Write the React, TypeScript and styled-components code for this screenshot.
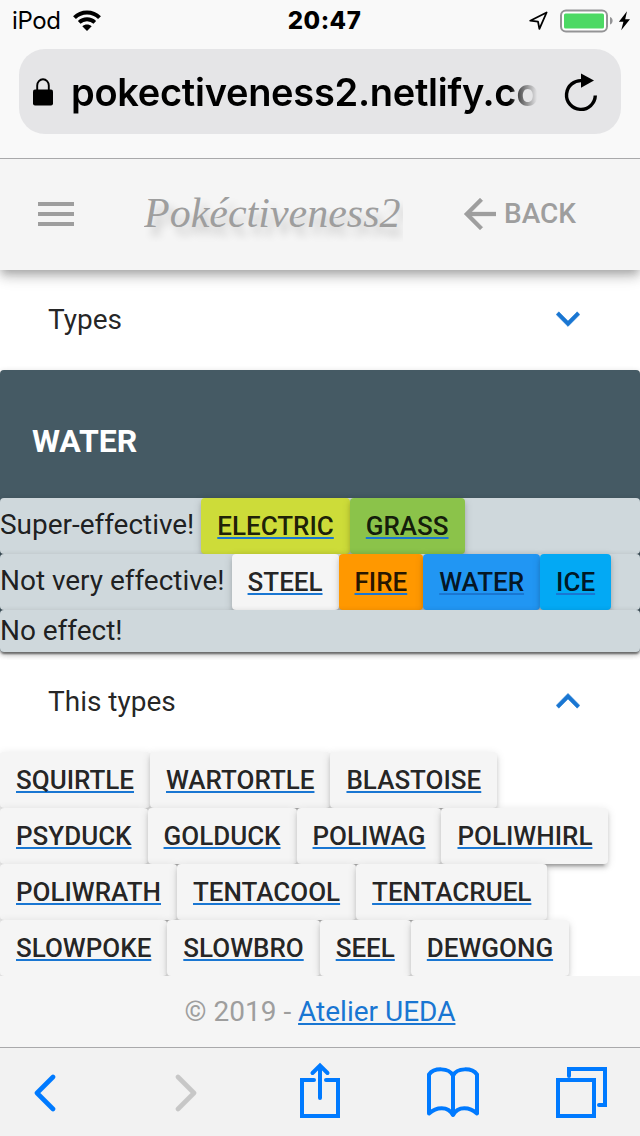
import React from 'react';
import styled, { createGlobalStyle } from 'styled-components';

const GlobalStyle = createGlobalStyle`
  *, *::before, *::after { box-sizing: border-box; }
  body { margin: 0; background: #fff; }
`;

const Screen = styled.div`
  width: 640px;
  height: 1136px;
  display: flex;
  flex-direction: column;
  overflow: hidden;
  background: #fff;
  color: rgba(0, 0, 0, 0.87);
  font-family: Roboto, sans-serif;
  font-size: 28px;
`;

const BrowserHeader = styled.header`
  flex: none;
  position: relative;
  z-index: 2;
  height: 159px;
  background: #f9f9f9;
  border-bottom: 1px solid #a9a9ab;
  color: #000;
  font-family: Inter, sans-serif;
`;

const StatusBar = styled.div`
  height: 49px;
  padding: 0 9px 8px 12px;
  display: grid;
  grid-template-columns: 1fr auto 1fr;
  align-items: center;
`;

const StatusGroup = styled.div<{ $end?: boolean }>`
  display: flex;
  align-items: center;
  justify-content: ${(p) => (p.$end ? 'flex-end' : 'flex-start')};
`;

const Carrier = styled.span`
  width: 60px;
  font-size: 24px;
  line-height: 30px;
  letter-spacing: -0.4px;
`;

const Clock = styled.time`
  padding-left: 6px;
  font-size: 24px;
  font-weight: 800;
  line-height: 30px;
  letter-spacing: 0.5px;
`;

const AddressBar = styled.div`
  margin: 0 19px;
  height: 85px;
  padding: 0 22px 0 14px;
  border-radius: 26px;
  background: #e5e5e7;
  display: flex;
  align-items: center;
`;

const Url = styled.div`
  width: 468px;
  margin: 0 24px 0 18px;
  white-space: nowrap;
  font-size: 38px;
  font-weight: 600;
  line-height: 56px;
  letter-spacing: -0.28px;
  mask-image: linear-gradient(to right, #000 438px, transparent 466px);
`;

const AppBar = styled.nav`
  flex: none;
  position: relative;
  z-index: 1;
  height: 111px;
  padding: 0 64px 2px 38px;
  display: flex;
  align-items: center;
  background: #f5f5f5;
  color: #9e9e9e;
  box-shadow: 0 4px 8px -2px rgba(0, 0, 0, 0.2), 0 8px 10px 0 rgba(0, 0, 0, 0.14),
    0 2px 20px 0 rgba(0, 0, 0, 0.12);
`;

const Brand = styled.h1`
  margin: 0 61px 2px 70px;
  width: 259px;
  font-family: 'Liberation Serif', serif;
  font-style: italic;
  font-weight: 400;
  font-size: 42px;
  line-height: 60px;
  white-space: nowrap;
  text-shadow: 6px 8px 8px rgba(0, 0, 0, 0.2);
  clip-path: inset(0);
`;

const BackButton = styled.button`
  padding: 0;
  border: 0;
  background: none;
  display: flex;
  align-items: center;
  gap: 8px;
  color: inherit;
  font: 500 28px/48px Roboto, sans-serif;
`;

const Content = styled.main`
  flex: 1;
  min-height: 0;
  overflow: hidden;
`;

const PanelSummary = styled.div`
  height: 100px;
  padding: 0 60px 0 48px;
  display: flex;
  align-items: center;
  justify-content: space-between;
  line-height: 42px;

  svg {
    margin-bottom: 3px;
  }
`;

const TypeCard = styled.section`
  border-radius: 4px;
  background: #455a64;
  box-shadow: 0 2px 6px 0 rgba(0, 0, 0, 0.2), 0 2px 2px 0 rgba(0, 0, 0, 0.14),
    0 4px 2px -2px rgba(0, 0, 0, 0.12);
`;

const CardTitle = styled.h2`
  margin: 0;
  height: 128px;
  padding: 14px 32px 0;
  color: #fff;
  font-size: 32px;
  font-weight: 700;
  line-height: 114px;
`;

const EffectRow = styled.div`
  position: relative;
  display: flex;
  min-height: 42px;
  border-radius: 4px;
  background: #cfd8dc;
  box-shadow: 0 2px 6px 0 rgba(0, 0, 0, 0.2), 0 2px 2px 0 rgba(0, 0, 0, 0.14),
    0 4px 2px -2px rgba(0, 0, 0, 0.12);
`;

const EffectLabel = styled.span<{ $tall: boolean }>`
  padding-right: 7px;
  line-height: ${(p) => (p.$tall ? 54 : 42)}px;
  letter-spacing: -0.03px;
  white-space: nowrap;
`;

const ChipRow = styled.div`
  display: flex;
`;

const Chip = styled.a<{ $color?: string }>`
  height: 56px;
  padding: 0 16px;
  border-radius: 4px;
  background: ${(p) => p.$color ?? '#f5f5f5'};
  box-shadow: 0 6px 2px -4px rgba(0, 0, 0, 0.2), 0 4px 4px 0 rgba(0, 0, 0, 0.14),
    0 2px 10px 0 rgba(0, 0, 0, 0.12);
  font-size: 26px;
  font-weight: 500;
  line-height: 56px;
  letter-spacing: -0.01px;
  white-space: nowrap;
  text-decoration: underline #1976d2 1.6px;
  text-decoration-skip-ink: none;
  text-underline-offset: 2px;
`;

const Footer = styled.footer`
  flex: none;
  position: relative;
  height: 71px;
  background: #f5f5f5;
  color: #9e9e9e;
  text-align: center;
  line-height: 71px;
`;

const FooterLink = styled.a`
  color: #1976d2;
  text-decoration: underline 1.6px;
  text-underline-offset: 2px;
`;

const Toolbar = styled.div`
  flex: none;
  height: 89px;
  padding-left: 34px;
  border-top: 1px solid #a9a9ab;
  background: #f2f2f2;
  display: flex;
`;

const ToolButton = styled.button<{ $top: number; $gap?: number }>`
  flex: none;
  padding: ${(p) => p.$top}px 0 0;
  margin: 0 ${(p) => p.$gap ?? 0}px 0 0;
  border: 0;
  background: none;
  display: flex;
  align-items: flex-start;
`;

const effects = [
  {
    label: 'Super-effective!',
    types: [
      ['ELECTRIC', '#cddc39'],
      ['GRASS', '#8bc34a'],
    ],
  },
  {
    label: 'Not very effective!',
    types: [
      ['STEEL', '#f5f5f5'],
      ['FIRE', '#ff9800'],
      ['WATER', '#2196f3'],
      ['ICE', '#03a9f4'],
    ],
  },
  { label: 'No effect!', types: [] },
];

const pokemon = [
  ['SQUIRTLE', 'WARTORTLE', 'BLASTOISE'],
  ['PSYDUCK', 'GOLDUCK', 'POLIWAG', 'POLIWHIRL'],
  ['POLIWRATH', 'TENTACOOL', 'TENTACRUEL'],
  ['SLOWPOKE', 'SLOWBRO', 'SEEL', 'DEWGONG'],
];

const WifiIcon = () => (
  <svg width="30" height="22" viewBox="0 0 30 22" fill="none" stroke="#000" strokeWidth="4">
    <path d="M2.5 7.6C9.3 .7 20.7.7 27.5 7.6" />
    <path d="M7.2 12.3c4.3-4.1 11.3-4.1 15.6 0" strokeWidth="3.8" />
    <path d="M10.3 16.2c2.6-2.4 6.8-2.4 9.4 0L15 21z" fill="#000" stroke="none" />
  </svg>
);

const StatusIcons = () => (
  <svg width="104" height="26" viewBox="0 0 104 26">
    <path d="M3.2 12.7 19.6 4.5 12.4 20.8 11 13.6z" fill="none" stroke="#000" strokeWidth="1.8" strokeLinejoin="round" />
    <rect x="34" y="2.4" width="46" height="21" rx="5" fill="#fff" stroke="#949496" strokeWidth="2" />
    <rect x="37" y="5.4" width="40" height="15" rx="1.5" fill="#4cd964" />
    <path d="M83 9c3.5 1.2 3.5 6.4 0 7.6z" fill="#949496" />
    <path d="m100 3.2-8.1 10.6h4.5l-2.2 8.4 8.8-11h-4.8z" fill="#000" />
  </svg>
);

const LockIcon = () => (
  <svg width="20" height="28" viewBox="0 0 20 28">
    <path d="M4.2 13V7.5a5.8 6.2 0 0 1 11.6 0V13" fill="none" stroke="#000" strokeWidth="1.9" />
    <rect y="11.5" width="20" height="16" rx="2" />
  </svg>
);

const ReloadIcon = () => (
  <svg width="34" height="40" viewBox="0 0 34 40">
    <path d="M32.3 23.5A14.4 14.4 0 1 1 19.5 8.7" fill="none" stroke="#000" strokeWidth="3.4" />
    <path d="M18 1.5 31 8.5 18 15.8z" />
  </svg>
);

const MenuIcon = () => (
  <svg width="36" height="24" viewBox="0 0 36 24" fill="#9e9e9e">
    <path d="M0 0h36v4H0zM0 10h36v4H0zM0 20h36v4H0z" />
  </svg>
);

const ArrowBackIcon = () => (
  <svg width="32" height="32" viewBox="4 4 16 16" fill="#9e9e9e" stroke="#9e9e9e" strokeWidth=".15">
    <path d="M20 11H7.83l5.59-5.59L12 4l-8 8 8 8 1.41-1.41L7.83 13H20v-2z" />
  </svg>
);

const ExpandIcon = ({ open = false }: { open?: boolean }) => (
  <svg width="24" height="16" viewBox="6 7.4 12 8" fill="#1976d2" stroke="#1976d2" strokeWidth=".25">
    {open ? (
      <path d="M12 7.6l-5.9 6L7.41 15 12 10.43 16.59 15 17.9 13.6z" />
    ) : (
      <path d="M16.59 7.8 12 12.38 7.41 7.8 6.1 9.21l5.9 5.9 5.9-5.9z" />
    )}
  </svg>
);

const line = { fill: 'none', stroke: '#007aff', strokeWidth: 4, strokeLinecap: 'round' as const };

const PrevIcon = () => (
  <svg width="22" height="38" viewBox="0 0 22 38" {...line} strokeWidth={4.6} strokeLinejoin="round">
    <path d="M19 3 3 19l16 16" />
  </svg>
);

const NextIcon = () => (
  <svg width="22" height="38" viewBox="0 0 22 38" {...line} strokeWidth={4.6} stroke="#c7c7c7" strokeLinejoin="round">
    <path d="m3 3 16 16L3 35" />
  </svg>
);

const ShareIcon = () => (
  <svg width="40" height="56" viewBox="0 0 40 56" {...line}>
    <path d="M14 18H2v36h36V18H26M20 36V4M12.5 11 20 3.5l7.5 7.5" />
  </svg>
);

const BookIcon = () => (
  <svg width="52" height="52" viewBox="0 0 52 52" {...line} strokeLinejoin="round">
    <path d="M26 9.5C22 1.5 7 1.500 2 8.500V47.500C9 41 21 39.500 26 49 31 39.500 43 41 50 47.500V8.500C45 1.500 30 1.500 26 9.500zM26 9.500v39" />
  </svg>
);

const TabsIcon = () => (
  <svg width="52" height="52" viewBox="0 0 52 52" {...line}>
    <path d="M2 14h36v36H2z" />
    <path d="M13 10V3h36v36h-6" />
  </svg>
);

export default function App() {
  return (
    <Screen>
      <GlobalStyle />
      <BrowserHeader>
        <StatusBar>
          <StatusGroup>
            <Carrier>iPod</Carrier>
            <WifiIcon />
          </StatusGroup>
          <Clock>20:47</Clock>
          <StatusGroup $end>
            <StatusIcons />
          </StatusGroup>
        </StatusBar>
        <AddressBar>
          <LockIcon />
          <Url>pokectiveness2.netlify.co</Url>
          <ReloadIcon />
        </AddressBar>
      </BrowserHeader>
      <AppBar>
        <MenuIcon />
        <Brand>Pokéctiveness2</Brand>
        <BackButton>
          <ArrowBackIcon />
          BACK
        </BackButton>
      </AppBar>
      <Content>
        <PanelSummary>
          Types
          <ExpandIcon />
        </PanelSummary>
        <TypeCard>
          <CardTitle>WATER</CardTitle>
          {effects.map(({ label, types }) => (
            <EffectRow key={label}>
              <EffectLabel $tall={types.length > 0}>{label}</EffectLabel>
              {types.map(([name, color]) => (
                <Chip key={name} $color={color}>{name}</Chip>
              ))}
            </EffectRow>
          ))}
        </TypeCard>
        <PanelSummary>
          This types
          <ExpandIcon open />
        </PanelSummary>
        {pokemon.map((names) => (
          <ChipRow key={names[0]}>
            {names.map((name) => (
              <Chip key={name}>{name}</Chip>
            ))}
          </ChipRow>
        ))}
      </Content>
      <Footer>
        © 2019 - <FooterLink>Atelier UEDA</FooterLink>
      </Footer>
      <Toolbar>
        <ToolButton $top={26} $gap={119}><PrevIcon /></ToolButton>
        <ToolButton $top={26} $gap={103}><NextIcon /></ToolButton>
        <ToolButton $top={14} $gap={87}><ShareIcon /></ToolButton>
        <ToolButton $top={18} $gap={77}><BookIcon /></ToolButton>
        <ToolButton $top={18}><TabsIcon /></ToolButton>
      </Toolbar>
    </Screen>
  );
}
